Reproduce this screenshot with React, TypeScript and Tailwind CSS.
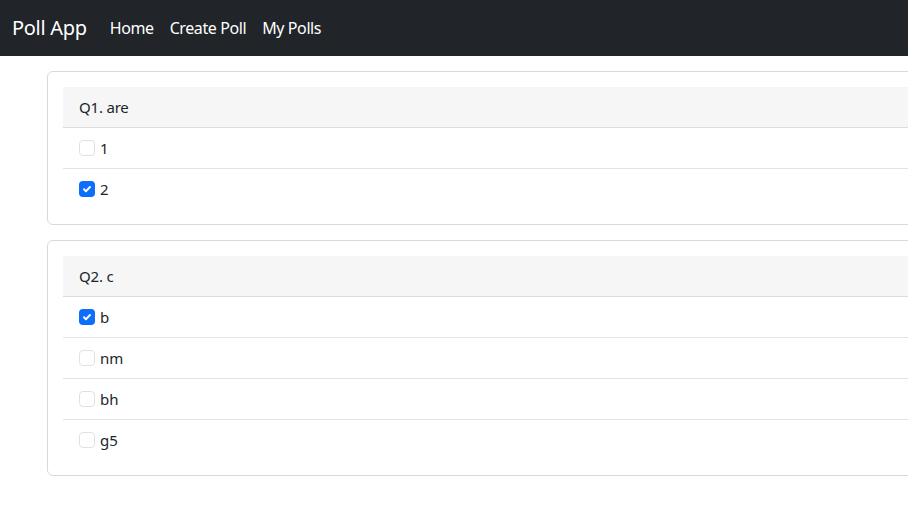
import React from "react";

type Q = { title: string; options: { label: string; checked: boolean }[] };

const questions: Q[] = [
  { title: "Q1. are", options: [{ label: "1", checked: false }, { label: "2", checked: true }] },
  {
    title: "Q2. c",
    options: [
      { label: "b", checked: true },
      { label: "nm", checked: false },
      { label: "bh", checked: false },
      { label: "g5", checked: false },
    ],
  },
];

function Box({ checked }: { checked: boolean }) {
  if (checked) {
    return (
      <span className="flex h-4 w-4 shrink-0 items-center justify-center rounded-[4px] bg-[#0d6efd]">
        <svg width="12" height="12" viewBox="0 0 20 20">
          <path d="M5 10.5l3.2 3.2 6.8-7" fill="none" stroke="#fff" strokeWidth="3.2" strokeLinecap="round" strokeLinejoin="round" />
        </svg>
      </span>
    );
  }
  return <span className="h-4 w-4 shrink-0 rounded-[4px] border border-[#dee2e6] bg-white" />;
}

export default function App() {
  return (
    <div className="w-screen overflow-hidden bg-white min-h-[521px] text-[#212529]" style={{ fontFamily: '"Noto Sans", "Open Sans", sans-serif' }}>
      <nav className="flex h-14 items-center bg-[#212529] px-3">
        <span className="text-[20px] text-white tracking-[-0.3px]">Poll App</span>
        <div className="ml-[23px] flex gap-4 text-[16px] text-white tracking-[-0.4px]">
          <span>Home</span>
          <span>Create Poll</span>
          <span>My Polls</span>
        </div>
      </nav>
      <div className="flex flex-col gap-[15px] pl-[47px] pt-[15px]">
        {questions.map((q) => (
          <div key={q.title} className="w-[1000px] shrink-0 rounded-[6px] border border-[#d9d9d9] p-[15px]">
            <div className="flex h-[41px] items-center border-b border-[#dcdcdc] bg-[#f6f6f6] px-4 text-[15px] tracking-[-0.2px]">
              {q.title}
            </div>
            {q.options.map((o, i) => (
              <div
                key={o.label}
                className={`flex h-10 items-center gap-[5px] px-4 text-[15px] ${i < q.options.length - 1 ? "h-[41px] border-b border-[#e3e3e3]" : ""}`}
              >
                <Box checked={o.checked} />
                <span>{o.label}</span>
              </div>
            ))}
          </div>
        ))}
      </div>
    </div>
  );
}
